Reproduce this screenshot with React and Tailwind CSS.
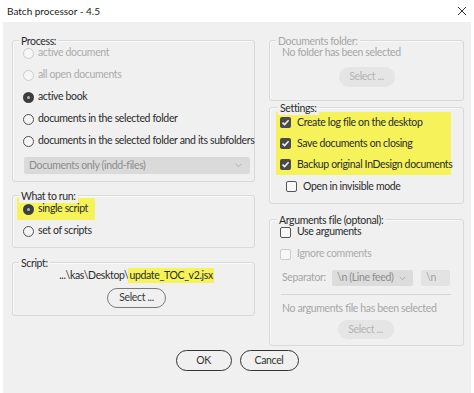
const font = { fontFamily: 'Lato, "Liberation Sans", sans-serif' }

function Group({ label, className = '', labelClass = '', bodyClass = '', disabled, children }) {
  return (
    <div className={`rounded-[3px] border border-[#d9d9d9] shadow-[inset_1px_1px_0_#fafafa] ${className}`}>
      <div className={`relative z-10 -mt-[7px] ml-[6px] w-fit bg-[#f0f0f0] px-[2px] leading-[14px] ${disabled ? 'text-[#a6a6a6]' : 'text-[#2b2b2b]'} ${labelClass}`}>{label}</div>
      <div className={bodyClass}>{children}</div>
    </div>
  )
}

function Radio({ label, checked, disabled }) {
  return (
    <div className={`flex h-[22px] items-center gap-[4px] ${disabled ? 'text-[#ababab]' : 'text-[#2b2b2b]'}`}>
      {checked ? (
        <span className="flex h-[11px] w-[11px] shrink-0 items-center justify-center rounded-full bg-[#3d3d3d]">
          <span className="h-[3px] w-[3px] rounded-full bg-[#b5b5b5]" />
        </span>
      ) : (
        <span className={`h-[11px] w-[11px] shrink-0 rounded-full border bg-[#f7f7f7] ${disabled ? 'border-[#cccccc]' : 'border-[#505050]'}`} />
      )}
      <span>{label}</span>
    </div>
  )
}

function Check({ label, checked, disabled, h = 'h-[21px]' }) {
  return (
    <div className={`flex ${h} items-center gap-[6px] ${disabled ? 'text-[#ababab]' : 'text-[#2b2b2b]'}`}>
      {checked ? (
        <span className="flex h-[11px] w-[11px] shrink-0 items-center justify-center rounded-[2px] bg-[#4a4a4a]">
          <svg width="9" height="9" viewBox="0 0 9 9" fill="none">
            <path d="M1.5 4.6 L3.6 6.6 L7.6 2.2" stroke="#f2f2f2" strokeWidth="1.5" />
          </svg>
        </span>
      ) : (
        <span className={`h-[11px] w-[11px] shrink-0 rounded-[2px] border bg-[#f8f8f8] ${disabled ? 'border-[#cccccc]' : 'border-[#555555]'}`} />
      )}
      <span>{label}</span>
    </div>
  )
}

function Chevron({ color = '#a0a0a0' }) {
  return (
    <svg width="7" height="5" viewBox="0 0 7 5" fill="none">
      <path d="M0.8 1 L3.5 3.7 L6.2 1" stroke={color} strokeWidth="1" />
    </svg>
  )
}

export default function App() {
  return (
    <div className="flex h-[393px] w-[474px] flex-col whitespace-nowrap bg-white text-[10.5px] tracking-[-0.35px]" style={font}>
      <div className="flex h-[22px] shrink-0 items-center justify-between pl-[7px] pr-[7px] text-[10px] tracking-normal text-[#1a1a1a]">
        <span>Batch processor - 4.5</span>
        <svg width="10" height="10" viewBox="0 0 10 10" fill="none">
          <path d="M1 1 L9 9 M9 1 L1 9" stroke="#333" strokeWidth="1" />
        </svg>
      </div>

      <div className="mx-[3px] flex flex-1 flex-col bg-[#f0f0f0] pl-[9px] pt-[18px]">
        <div className="flex gap-[14px]">
          <div className="flex w-[243px] flex-col">
            <Group label="Process:" labelClass="-mb-[6px]" bodyClass="pb-[7px] pl-[10px] pr-[4px]">
              <Radio label="active document" disabled />
              <Radio label="all open documents" disabled />
              <Radio label="active book" checked />
              <Radio label="documents in the selected folder" />
              <Radio label="documents in the selected folder and its subfolders" />
              <div className="mt-[5px] ml-[1px] flex h-[17px] items-center justify-between rounded-[2px] bg-[#dadada] pl-[5px] pr-[8px] text-[#8c8c8c]">
                <span>Documents only (indd-files)</span>
                <Chevron color="#b0b0b0" />
              </div>
            </Group>

            <Group label="What to run:" className="mt-[13px]" labelClass="-mb-[5px]" bodyClass="pb-[5px] pl-[4px]">
              <div className="w-fit bg-[#f5f25a] pl-[6px] pr-[7px]">
                <Radio label="single script" checked />
              </div>
              <div className="pl-[6px]">
                <Radio label="set of scripts" />
              </div>
            </Group>

            <Group label="Script:" className="mt-[14px]" labelClass="-mb-[2px]" bodyClass="flex flex-col items-center pb-[7px] pl-[6px]">
              <div className="flex h-[15px] items-center text-[#2b2b2b]">
                <span>...\kas\Desktop\</span>
                <span className="bg-[#f5f25a] px-[1px] leading-[15px]">update_TOC_v2.jsx</span>
              </div>
              <button className="mt-[5px] flex h-[20px] w-[59px] items-center justify-center rounded-full border border-[#7a7a7a] text-[#3a3a3a]">
                Select ...
              </button>
            </Group>
          </div>

          <div className="flex w-[195px] flex-col">
            <Group label="Documents folder:" disabled labelClass="-mb-[2px]" bodyClass="pb-[13px]">
              <div className="flex h-[14px] items-center pl-[12px] text-[#a6a6a6]">No folder has been selected</div>
              <div className="mt-[7px] flex justify-center">
                <div className="flex h-[20px] w-[56px] items-center justify-center rounded-full bg-[#e5e5e5] text-[#b3b3b3]">Select ...</div>
              </div>
            </Group>

            <Group label="Settings:" className="mt-[6px]" labelClass="-mb-[3px] ml-[8px] px-[1px]" bodyClass="pb-[5px] pl-[6px] pr-[12px]">
              <div className="bg-[#f5f25a] pl-[4px]">
                <Check label="Create log file on the desktop" checked />
                <Check label="Save documents on closing" checked />
                <Check label="Backup original InDesign documents" checked />
              </div>
              <div className="pl-[10px]">
                <Check label="Open in invisible mode" h="h-[23px]" />
              </div>
            </Group>

            <Group label="Arguments file (optonal):" className="mt-[15px]" labelClass="-mb-[6px] ml-[7px]" bodyClass="pb-[6px] pl-[10px] pr-[12px]">
              <Check label="Use arguments" h="h-[22px]" />
              <Check label="Ignore comments" disabled h="h-[22px]" />
              <div className="mt-[5px] flex h-[16px] items-center text-[#a6a6a6]">
                <span className="ml-[2px] w-[50px]">Separator:</span>
                <div className="flex h-[16px] w-[81px] items-center justify-between rounded-[2px] bg-[#dcdcdc] pl-[5px] pr-[7px] text-[#8c8c8c]">
                  <span>\n (Line feed)</span>
                  <Chevron color="#b0b0b0" />
                </div>
                <div className="ml-[8px] flex h-[16px] w-[29px] items-center rounded-[2px] bg-[#e3e3e3] pl-[5px] text-[#a0a0a0]">\n</div>
              </div>
              <div className="mt-[8px] ml-[1px] h-px bg-[#d6d6d6]" />
              <div className="mt-[7px] flex h-[14px] items-center pl-[2px] text-[#a6a6a6]">No arguments file has been selected</div>
              <div className="mt-[4px] flex justify-center">
                <div className="flex h-[19px] w-[56px] items-center justify-center rounded-full bg-[#e5e5e5] text-[#b3b3b3]">Select ...</div>
              </div>
            </Group>
          </div>
        </div>

        <div className="mt-[4px] flex justify-center gap-[8px] pr-[9px]">
          <button className="flex h-[21px] w-[56px] items-center justify-center rounded-full border-[1.5px] border-[#333333] text-[#333333]">OK</button>
          <button className="flex h-[21px] w-[59px] items-center justify-center rounded-full border-[1.5px] border-[#333333] text-[#333333]">Cancel</button>
        </div>
      </div>
    </div>
  )
}
